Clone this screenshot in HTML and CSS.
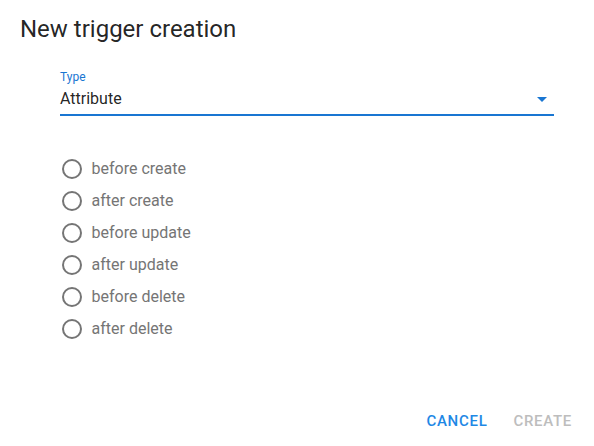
FILE: index.html
```html
<!DOCTYPE html>
<html lang="en">
<head>
<meta charset="utf-8">
<title>New trigger creation</title>
<link rel="stylesheet" href="styles.css">
</head>
<body>
<div class="dialog">
  <h2 class="title">New trigger creation</h2>
  <div class="content">
    <div class="select">
      <label class="select-label">Type</label>
      <div class="select-input">
        <span class="select-value">Attribute</span>
        <svg class="select-arrow" width="10" height="5" viewBox="0 0 10 5"><path d="M0 0h10L5 5z" fill="#1976d2"/></svg>
      </div>
    </div>
    <div class="radios">
      <label class="radio"><svg class="radio-icon" width="24" height="24" viewBox="0 0 24 24"><circle cx="12" cy="12" r="9" fill="none" stroke="#757575" stroke-width="2"/></svg><span>before create</span></label>
      <label class="radio"><svg class="radio-icon" width="24" height="24" viewBox="0 0 24 24"><circle cx="12" cy="12" r="9" fill="none" stroke="#757575" stroke-width="2"/></svg><span>after create</span></label>
      <label class="radio"><svg class="radio-icon" width="24" height="24" viewBox="0 0 24 24"><circle cx="12" cy="12" r="9" fill="none" stroke="#757575" stroke-width="2"/></svg><span>before update</span></label>
      <label class="radio"><svg class="radio-icon" width="24" height="24" viewBox="0 0 24 24"><circle cx="12" cy="12" r="9" fill="none" stroke="#757575" stroke-width="2"/></svg><span>after update</span></label>
      <label class="radio"><svg class="radio-icon" width="24" height="24" viewBox="0 0 24 24"><circle cx="12" cy="12" r="9" fill="none" stroke="#757575" stroke-width="2"/></svg><span>before delete</span></label>
      <label class="radio"><svg class="radio-icon" width="24" height="24" viewBox="0 0 24 24"><circle cx="12" cy="12" r="9" fill="none" stroke="#757575" stroke-width="2"/></svg><span>after delete</span></label>
    </div>
  </div>
  <div class="actions">
    <button class="btn btn-primary">Cancel</button>
    <button class="btn btn-disabled" disabled>Create</button>
  </div>
</div>
</body>
</html>
```

FILE: styles.css
```css
* { box-sizing: border-box; }
html, body { margin: 0; padding: 0; background: #fff; }
body { font-family: Roboto, "Liberation Sans", sans-serif; }

.dialog {
  width: 594px;
  height: 446px;
  display: flex;
  flex-direction: column;
}

.title {
  margin: 0;
  padding: 13px 20px 0 20px;
  font-size: 24px;
  font-weight: 400;
  line-height: 32px;
  color: rgba(0, 0, 0, 0.87);
}

.content {
  flex: 1;
  padding: 25px 40px 0 60px;
}

.select {
  display: flex;
  flex-direction: column;
}

.select-label {
  font-size: 12px;
  line-height: 14px;
  color: #1976d2;
}

.select-input {
  margin-top: 5px;
  display: flex;
  align-items: center;
  justify-content: space-between;
  padding-bottom: 6px;
  border-bottom: 2px solid #1976d2;
}

.select-value {
  font-size: 16px;
  line-height: 19px;
  color: rgba(0, 0, 0, 0.87);
}

.select-arrow {
  margin-right: 7px;
  margin-top: 1px;
}

.radios {
  margin-top: 37px;
  display: flex;
  flex-direction: column;
}

.radio {
  height: 32px;
  display: flex;
  align-items: center;
  font-size: 16px;
  line-height: 32px;
  color: #757575;
}

.radio-icon {
  margin-left: -0.5px;
  margin-right: 8px;
}

.actions {
  display: flex;
  justify-content: flex-end;
  gap: 10px;
  padding: 0 14px 7px 0;
}

.btn {
  font-family: Roboto, "Liberation Sans", sans-serif;
  font-size: 15px;
  font-weight: 500;
  letter-spacing: 0.7px;
  text-transform: uppercase;
  line-height: 24px;
  padding: 6px 8px;
  border: 0;
  background: none;
}

.btn-primary { color: #1e88e5; }
.btn-disabled { color: #bdbdbd; }
```
